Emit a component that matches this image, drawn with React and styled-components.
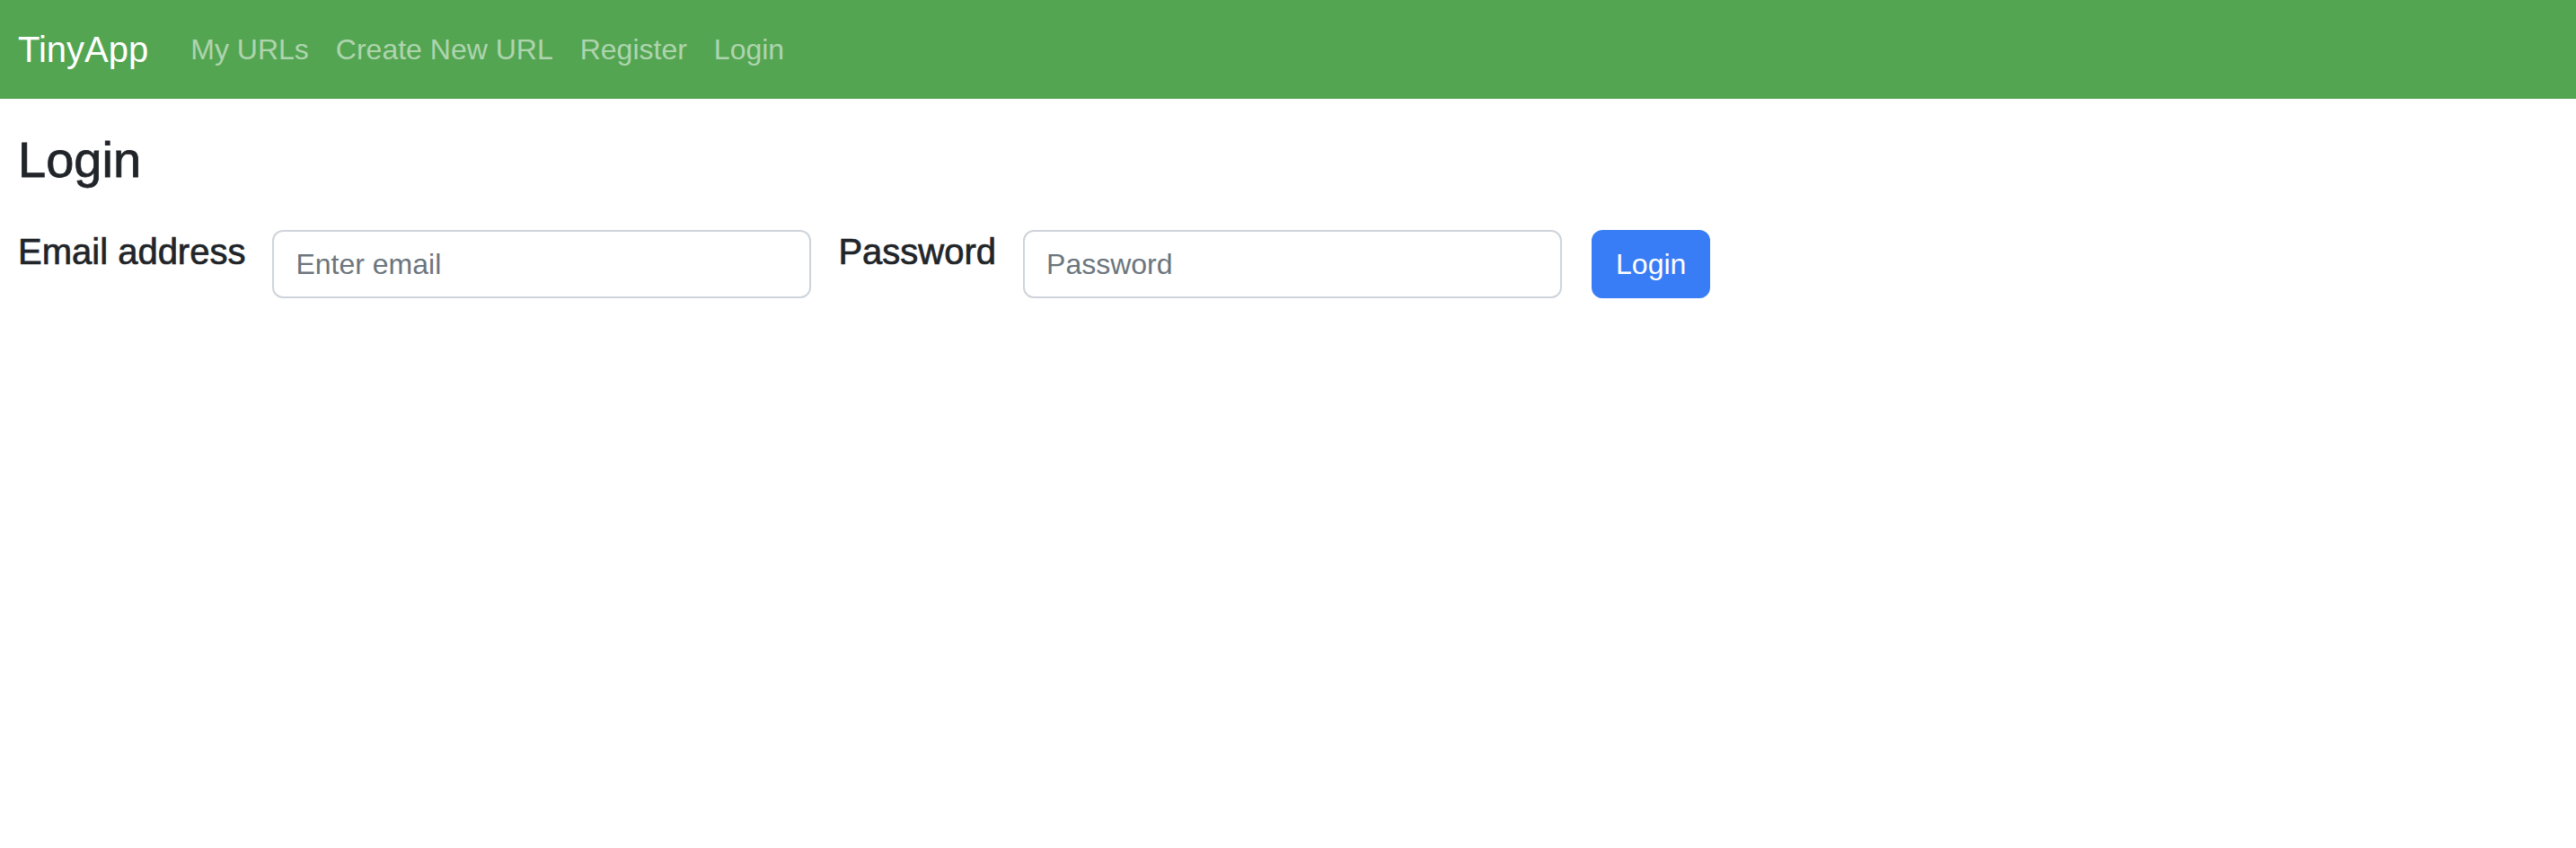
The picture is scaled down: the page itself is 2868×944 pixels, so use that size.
import React from "react";
import styled, { createGlobalStyle } from "styled-components";

const Global = createGlobalStyle`
  html, body { margin: 0; padding: 0; background: #fff; }
  body {
    font-family: "Liberation Sans", Arial, sans-serif;
    color: #212529;
    -webkit-font-smoothing: antialiased;
  }
  * { box-sizing: border-box; }
`;

const Navbar = styled.nav`
  display: flex;
  align-items: center;
  height: 110px;
  padding: 0 20px;
  background: #53a552;
`;

const Brand = styled.a`
  font-size: 40px;
  line-height: 60px;
  color: #fff;
  text-decoration: none;
  margin-right: 32px;
`;

const NavList = styled.ul`
  display: flex;
  list-style: none;
  margin: 0;
  padding: 0;
`;

const NavLink = styled.a`
  display: block;
  padding: 16px 15px;
  font-size: 32px;
  line-height: 48px;
  color: rgba(255, 255, 255, 0.55);
  text-decoration: none;
`;

const Main = styled.main`
  padding: 34px 20px 0;
`;

const Heading = styled.h3`
  margin: 0 0 45px;
  font-size: 56px;
  font-weight: 500;
  line-height: 1.2;
  color: #212529;
  -webkit-text-stroke: 0.8px currentColor;
`;

const Form = styled.form`
  display: flex;
  align-items: flex-start;
  gap: 30px;
`;

const Label = styled.label`
  font-size: 40px;
  font-weight: 500;
  line-height: 1.2;
  color: #212529;
  -webkit-text-stroke: 0.7px currentColor;
`;

const Input = styled.input`
  width: 600px;
  height: 76px;
  padding: 0 24px;
  border: 2px solid #ced4da;
  border-radius: 12px;
  font-family: inherit;
  font-size: 32px;
  color: #212529;
  background: #fff;
  outline: none;
  &::placeholder { color: #6c757d; opacity: 1; }
`;

const Button = styled.button`
  height: 76px;
  margin-left: 3px;
  padding: 0 25px;
  border: 2px solid #387df5;
  border-radius: 12px;
  background: #387df5;
  color: #fff;
  font-family: inherit;
  font-size: 32px;
  line-height: 1.5;
  cursor: pointer;
`;

const links = ["My URLs", "Create New URL", "Register", "Login"];

export default function App() {
  return (
    <>
      <Global />
      <Navbar>
        <Brand href="#">TinyApp</Brand>
        <NavList>
          {links.map((l) => (
            <li key={l}>
              <NavLink href="#">{l}</NavLink>
            </li>
          ))}
        </NavList>
      </Navbar>
      <Main>
        <Heading>Login</Heading>
        <Form onSubmit={(e) => e.preventDefault()}>
          <Label htmlFor="email">Email address</Label>
          <Input id="email" type="email" placeholder="Enter email" />
          <Label htmlFor="password">Password</Label>
          <Input id="password" type="password" placeholder="Password" />
          <Button type="submit">Login</Button>
        </Form>
      </Main>
    </>
  );
}
